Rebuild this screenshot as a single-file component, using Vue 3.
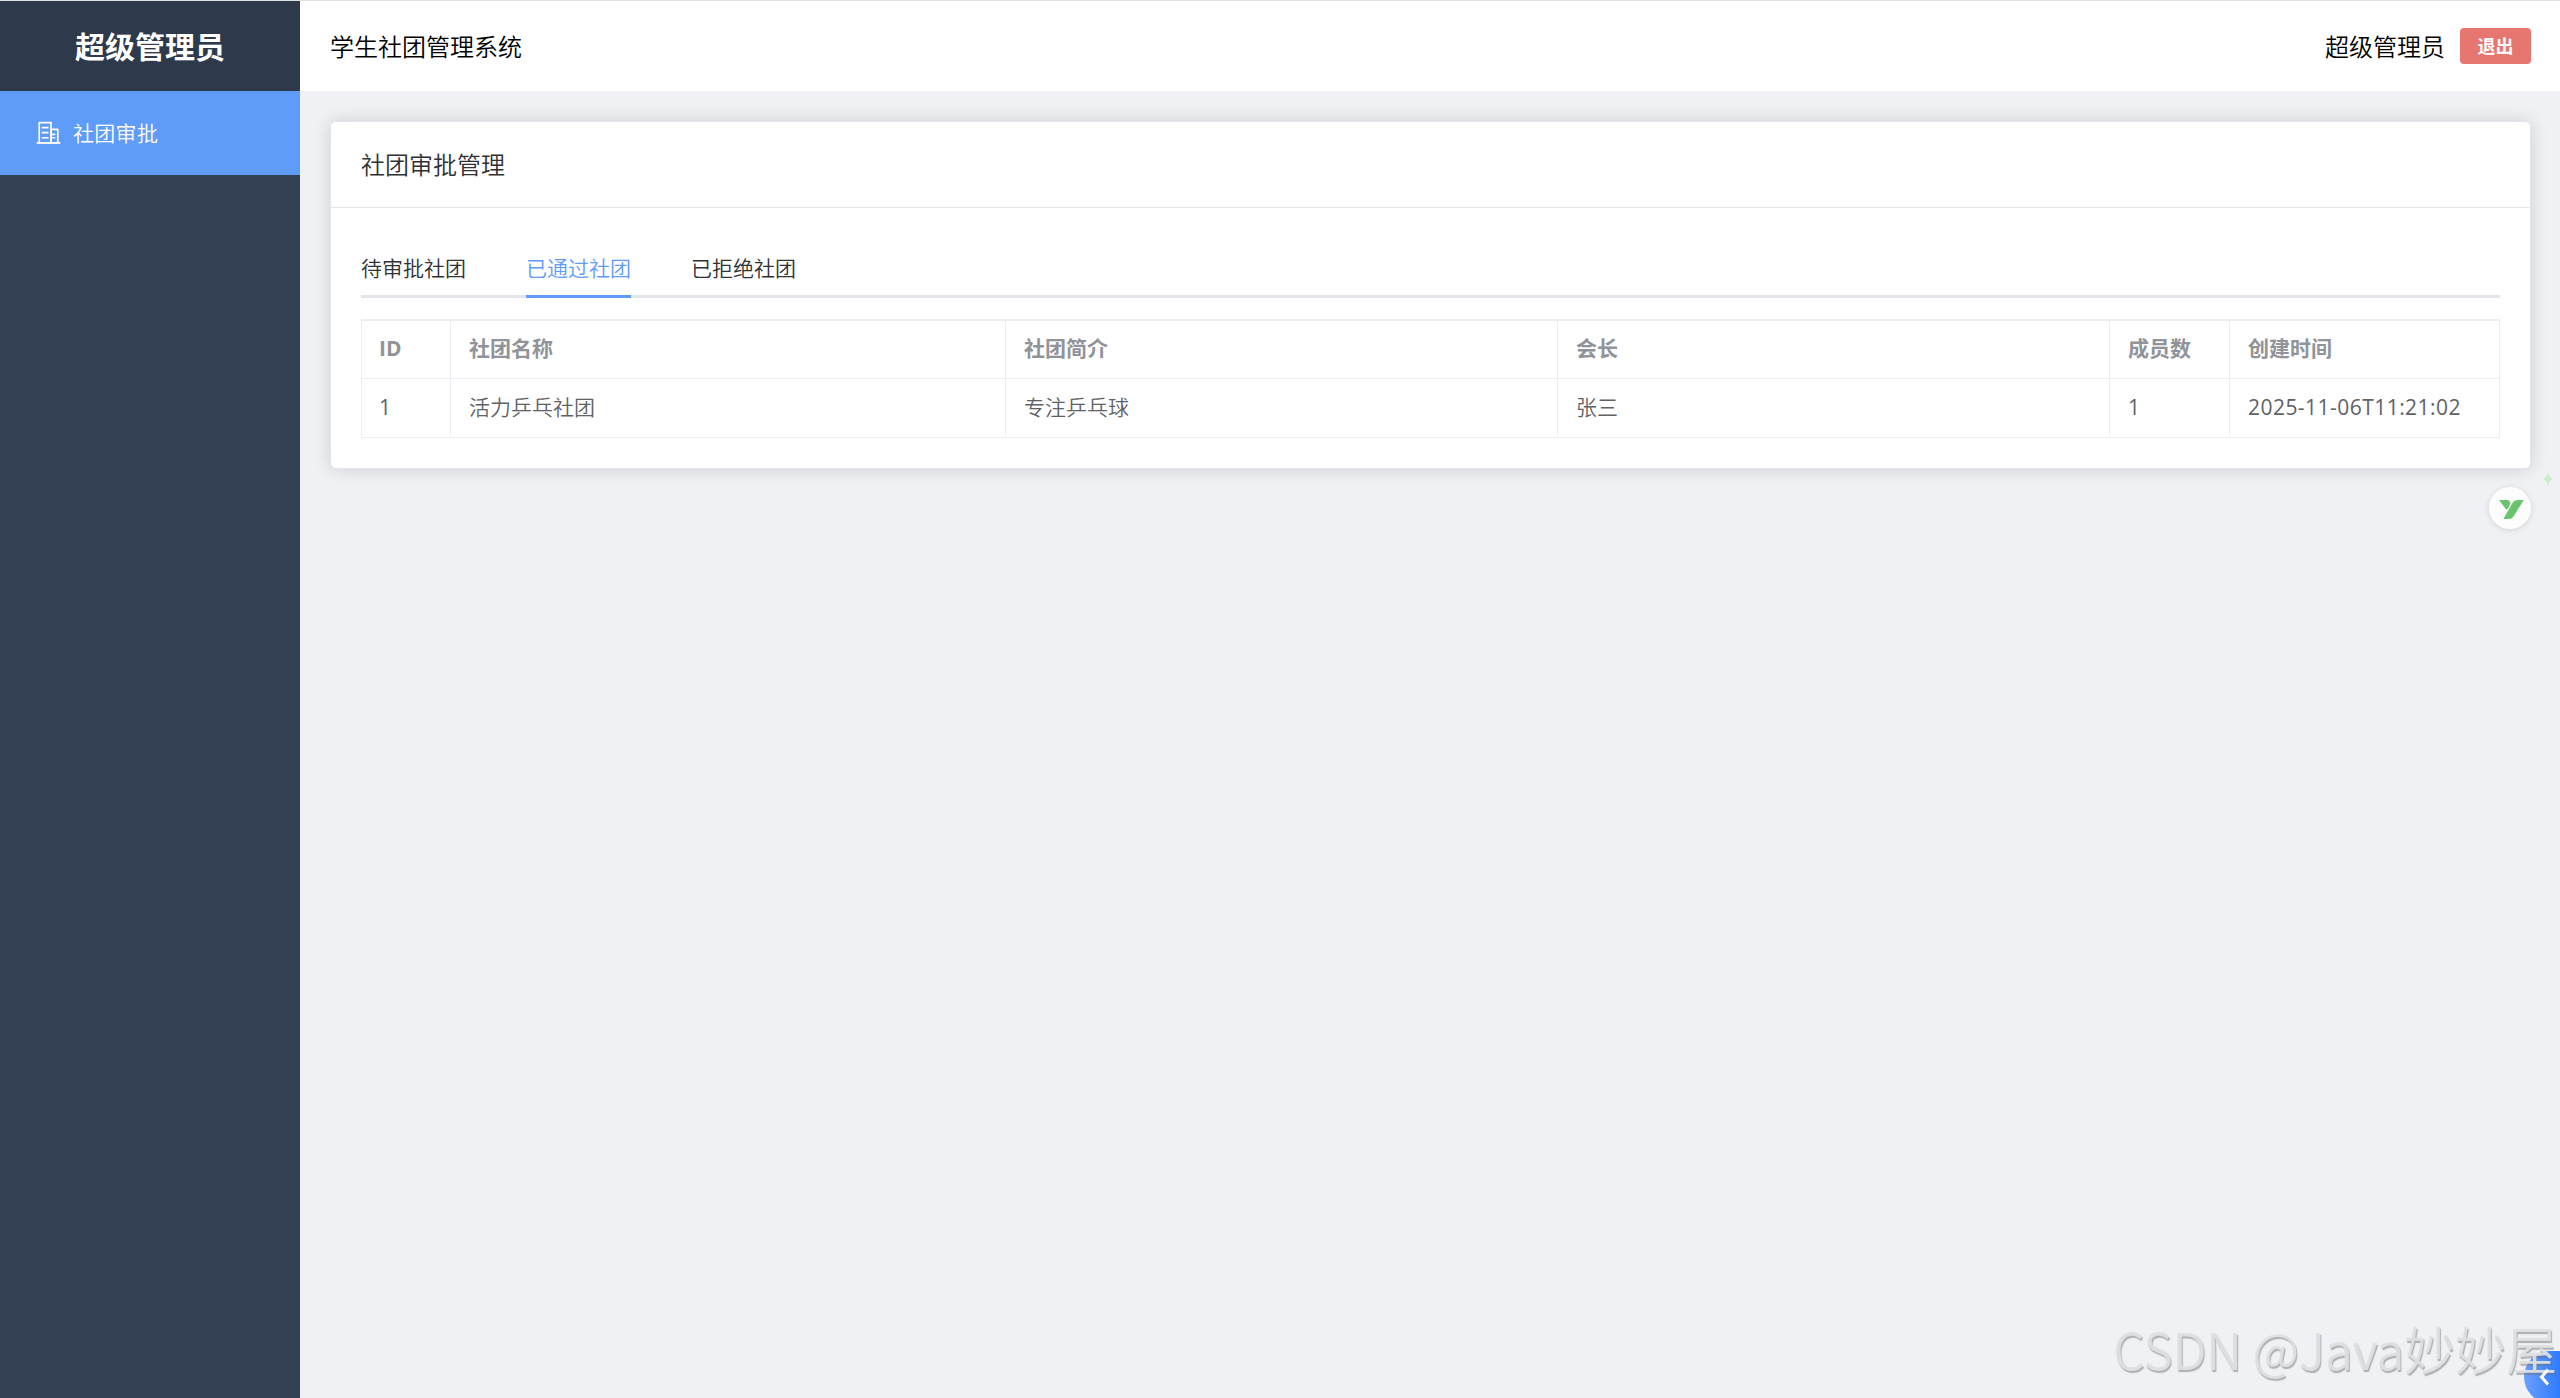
<template>
    <div class="layout">
        <aside class="sidebar">
            <div class="logo">{{ userName }}</div>
            <nav class="menu">
                <a class="menu-item">
                    <svg class="menu-icon" viewBox="0 0 1024 1024">
                        <path fill="currentColor" d="M192 128v704h384V128zm-32-64h448a32 32 0 0 1 32 32v768a32 32 0 0 1-32 32H160a32 32 0 0 1-32-32V96a32 32 0 0 1 32-32" />
                        <path fill="currentColor" d="M256 256h256v64H256zm0 192h256v64H256zm0 192h256v64H256zm384-128h128v64H640zm0 128h128v64H640zM64 832h896v64H64z" />
                        <path fill="currentColor" d="M640 384v448h192V384zm-32-64h256a32 32 0 0 1 32 32v512a32 32 0 0 1-32 32H608a32 32 0 0 1-32-32V352a32 32 0 0 1 32-32" />
                    </svg>
                    <span>社团审批</span>
                </a>
            </nav>
        </aside>
        <div class="container">
            <header class="header">
                <div class="system-name">学生社团管理系统</div>
                <div class="user">
                    <span class="user-name">{{ userName }}</span>
                    <button class="logout">退出</button>
                </div>
            </header>
            <main class="main">
                <section class="card">
                    <div class="card-header">社团审批管理</div>
                    <div class="card-body">
                        <div class="tabs">
                            <div
                                v-for="tab in tabs"
                                :key="tab"
                                class="tab"
                                :class="{ active: tab === activeTab }"
                                @click="activeTab = tab"
                            >{{ tab }}</div>
                        </div>
                        <table class="table">
                            <colgroup>
                                <col class="col-id" />
                                <col class="col-name" />
                                <col class="col-text" />
                                <col class="col-text" />
                                <col class="col-count" />
                                <col class="col-time" />
                            </colgroup>
                            <thead>
                                <tr>
                                    <th v-for="column in columns" :key="column.prop">{{ column.label }}</th>
                                </tr>
                            </thead>
                            <tbody>
                                <tr v-for="club in clubs" :key="club.id">
                                    <td v-for="column in columns" :key="column.prop" :class="column.prop">{{ club[column.prop] }}</td>
                                </tr>
                            </tbody>
                        </table>
                    </div>
                </section>
            </main>
        </div>

        <svg class="sparkle" viewBox="0 0 10 14">
            <path d="M5 0 Q5.8 5.6 10 7 Q5.8 8.4 5 14 Q4.2 8.4 0 7 Q4.2 5.6 5 0Z" fill="#c9edc6" />
        </svg>
        <div class="translate">
            <svg viewBox="0 0 25 19">
                <path d="M0 0H8Q11.5 .4 11.2 3.6Q10.8 6.5 7.6 10Z" fill="#6bc46d" />
                <path d="M24.8 0H18.5Q15.2 0 13.4 2.9L4.4 19H9.7Q13 19 14.8 16Z" fill="#6bc46d" />
            </svg>
        </div>
        <div class="drawer-handle">
            <svg viewBox="0 0 12 18">
                <path d="M9 1.5 L2.5 9 L9 16.5" fill="none" stroke="#fff" stroke-width="3" />
            </svg>
        </div>
        <div class="watermark"><span class="watermark-latin">CSDN @Java</span>妙妙屋</div>
    </div>
</template>

<script setup>
import { ref } from 'vue';

const userName = '超级管理员';
const tabs = ['待审批社团', '已通过社团', '已拒绝社团'];
const activeTab = ref('已通过社团');

const columns = [
    { prop: 'id', label: 'ID' },
    { prop: 'name', label: '社团名称' },
    { prop: 'description', label: '社团简介' },
    { prop: 'president', label: '会长' },
    { prop: 'memberCount', label: '成员数' },
    { prop: 'createTime', label: '创建时间' },
];

const clubs = ref([
    {
        id: 1,
        name: '活力乒乓社团',
        description: '专注乒乓球',
        president: '张三',
        memberCount: 1,
        createTime: '2025-11-06T11:21:02',
    },
]);
</script>

<style>
body {
    margin: 0;
    overflow: hidden;
}
</style>

<style scoped>
.layout {
    position: relative;
    display: flex;
    box-sizing: border-box;
    height: 100vh;
    overflow: hidden;
    border-top: 1px solid #e0e2e0;
    background: #f0f1f5;
    color: #000;
    font-family: "Open Sans", "Noto Sans CJK SC", sans-serif;
    font-size: 24px;
    font-weight: 350;
}

.sidebar {
    width: 300px;
    flex-shrink: 0;
    background: #344054;
}

.logo {
    height: 90px;
    line-height: 92px;
    background: #2e3a4b;
    color: #fff;
    font-size: 30px;
    font-weight: bold;
    text-align: center;
}

.menu-item {
    display: flex;
    align-items: center;
    gap: 11px;
    height: 84px;
    padding-left: 35px;
    background: #5f9bf9;
    color: #fff;
    font-size: 21px;
}

.menu-item span {
    padding-bottom: 2px;
    letter-spacing: 0.3px;
}

.menu-icon {
    width: 27px;
    height: 27px;
}

.container {
    flex: 1;
    min-width: 0;
}

.header {
    display: flex;
    align-items: center;
    justify-content: space-between;
    height: 90px;
    padding: 0 29px 0 30px;
    background: #fff;
}

.system-name,
.user-name {
    padding-bottom: 1px;
}

.user {
    display: flex;
    align-items: center;
    gap: 15px;
}

.logout {
    width: 71px;
    height: 36px;
    padding: 0;
    border: none;
    border-radius: 4px;
    background: #e6766f;
    color: #fff;
    font-family: inherit;
    font-size: 18px;
    font-weight: 600;
    line-height: 34px;
}

.main {
    padding: 30px 29px 30px 30px;
}

.card {
    border: 1px solid #e5e6eb;
    border-radius: 6px;
    background: #fff;
    box-shadow: 0 0 18px rgba(0, 0, 0, 0.14);
    color: #303133;
}

.card-header {
    height: 85px;
    padding: 0 30px;
    border-bottom: 1px solid #e5e6eb;
    line-height: 85px;
}

.card-body {
    padding: 30px;
}

.tabs {
    display: flex;
    gap: 60px;
    margin-bottom: 21px;
    box-shadow: inset 0 -3px #e5e6eb;
}

.tab {
    height: 57px;
    border-bottom: 3px solid transparent;
    font-size: 21px;
    line-height: 61px;
}

.tab.active {
    border-bottom-color: #5f9bf9;
    color: #5f9bf9;
}

.table {
    width: 2139px;
    border-top: 2px solid #ecedf2;
    border-left: 1px solid #ecedf2;
    border-spacing: 0;
    table-layout: fixed;
    box-sizing: border-box;
    color: #606266;
    font-size: 21px;
    text-align: left;
}

.table th,
.table td {
    box-sizing: border-box;
    height: 59px;
    padding: 0 18px;
    border-right: 1px solid #ecedf2;
    border-bottom: 1px solid #ecedf2;
    line-height: 56px;
}

.table th {
    height: 58px;
    padding-bottom: 3px;
    color: #909399;
    font-weight: bold;
    line-height: 54px;
}

.table td {
    padding-bottom: 2px;
}

.table th:first-child,
.table td:first-child {
    padding-left: 17px;
}

.table .createTime {
    letter-spacing: 0.46px;
}

.table .id,
.table .memberCount,
.table .createTime {
    font-weight: 400;
}

.col-id {
    width: 89px;
}

.col-name {
    width: 555px;
}

.col-text {
    width: 552px;
}

.col-count {
    width: 120px;
}

.col-time {
    width: 270px;
}

.sparkle {
    position: absolute;
    top: 471px;
    right: 7px;
    width: 10px;
    height: 14px;
}

.translate {
    position: absolute;
    top: 486px;
    right: 29px;
    display: flex;
    align-items: center;
    justify-content: center;
    width: 42px;
    height: 42px;
    border-radius: 50%;
    background: #fdfdfd;
    box-shadow: 0 1px 6px rgba(0, 0, 0, 0.12);
}

.translate svg {
    width: 25px;
    height: 19px;
    margin: 2px 0 0 2px;
}

.drawer-handle {
    position: absolute;
    top: 1350px;
    right: 0;
    width: 36px;
    height: 52px;
    border-radius: 26px 0 0 26px;
    background: linear-gradient(90deg, #6aa0fb, #2f7bff);
}

.drawer-handle svg {
    position: relative;
    z-index: 2;
    width: 12px;
    height: 18px;
    margin: 17px 0 0 15px;
}

.watermark {
    position: absolute;
    top: 1309px;
    right: 3px;
    color: rgba(222, 224, 223, 0.95);
    font-family: "Noto Sans CJK SC", sans-serif;
    font-size: 51px;
    font-weight: 350;
    line-height: 76px;
    text-shadow: 1px 2px 1px rgba(110, 110, 115, 0.5);
    white-space: nowrap;
}

.watermark-latin {
    font-size: 50px;
    letter-spacing: -0.4px;
}
</style>
